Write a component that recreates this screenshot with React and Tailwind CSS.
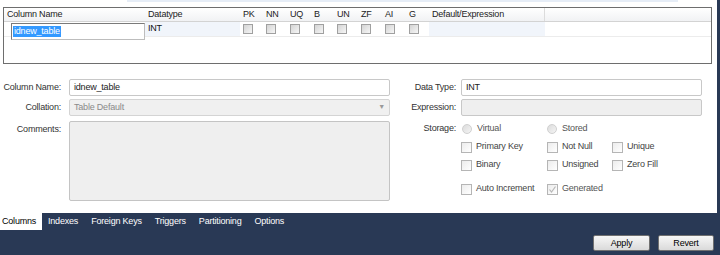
import React from 'react';

const font = { fontFamily: '"Liberation Sans", Arial, sans-serif' };

const gridCols = [
  { key: 'PK', w: 'w-[23px]' },
  { key: 'NN', w: 'w-[24px]' },
  { key: 'UQ', w: 'w-[24px]' },
  { key: 'B', w: 'w-[23px]' },
  { key: 'UN', w: 'w-[24px]' },
  { key: 'ZF', w: 'w-[24px]' },
  { key: 'AI', w: 'w-[24px]' },
  { key: 'G', w: 'w-[23px]' },
];

function GridCheck() {
  return <div className="w-[10px] h-[10px] border border-[#a0a0a0] bg-gradient-to-br from-[#d4d4d4] to-[#f6f6f6]" />;
}

function Check({ label, checked, disabled }) {
  return (
    <div className="flex items-center">
      <div className="w-[11px] h-[11px] border border-[#b5b5b5] bg-gradient-to-br from-[#ececec] to-white flex items-center justify-center">
        {checked && (
          <svg width="9" height="9" viewBox="0 0 9 9">
            <path d="M1.5 4.5 L3.5 7 L7.5 1.5" fill="none" stroke="#b8b8b8" strokeWidth="1.2" />
          </svg>
        )}
      </div>
      <span className={`ml-[4px] ${disabled ? 'text-[#555]' : 'text-[#444]'}`}>{label}</span>
    </div>
  );
}

function Radio({ label }) {
  return (
    <div className="flex items-center">
      <div className="w-[10px] h-[10px] rounded-full border border-[#d0d0d0] bg-gradient-to-br from-[#dcdcdc] to-[#f4f4f4]" />
      <span className="ml-[5px] text-[#555]">{label}</span>
    </div>
  );
}

export default function App() {
  return (
    <div className="w-[720px] h-[255px] bg-[#293955] flex flex-col text-[9px] tracking-[-0.2px] overflow-hidden" style={font}>
      <div className="w-[717px] h-[213px] bg-white flex flex-col">
        {/* grid area */}
        <div className="h-[64px] relative">
          <div className="h-[2px] ml-[127px] w-[551px] bg-[#e6edf7]" />
          <div className="mt-[5px] ml-[3px] w-[709px] h-[57px] border border-[#6e6e6e] bg-white flex flex-col">
            <div className="h-[14px] flex items-center border-b border-[#d3d3d3] bg-gradient-to-b from-white to-[#f1f2f4] text-[#222]">
              <div className="w-[141px] pl-[3px]">Column Name</div>
              <div className="w-[95px] pl-[3px]">Datatype</div>
              {gridCols.map((c) => (
                <div key={c.key} className={`${c.w} pl-[3px]`}>{c.key}</div>
              ))}
              <div className="w-[116px] h-full pl-[3px] border-r border-[#dcdcdc] flex items-center">Default/Expression</div>
            </div>
            <div className="h-[15px] flex items-center border-b border-[#ececec]">
              <div className="w-[141px] h-full relative">
                <div className="absolute left-[7px] top-[1px] w-[134px] h-[17px] border border-[#7a7a7a] border-b-[#bdbdbd] border-r-[#bdbdbd] bg-white flex items-center pl-[1px]">
                  <span className="bg-[#3399ff] text-white px-[1px] leading-[11px]">idnew_table</span>
                </div>
              </div>
              <div className="w-[95px] h-full pl-[3px] flex items-center bg-[#f1f5fb] text-[#111]">INT</div>
              {gridCols.map((c) => (
                <div key={c.key} className={`${c.w} h-full pl-[3px] flex items-center`}>
                  <GridCheck />
                </div>
              ))}
              <div className="w-[116px] h-full bg-[#f1f5fb]" />
            </div>
          </div>
        </div>

        {/* detail panel */}
        <div className="flex pt-[15px] text-[#333]">
          <div className="flex flex-col">
            <div className="flex items-center h-[17px]">
              <div className="w-[61px] text-right">Column Name:</div>
              <div className="ml-[8px] w-[321px] h-[17px] border border-[#c8c8c8] rounded-[2px] bg-white flex items-center pl-[4px] text-[#222]">idnew_table</div>
            </div>
            <div className="flex items-center h-[17px] mt-[3px]">
              <div className="w-[61px] text-right">Collation:</div>
              <div className="ml-[8px] w-[321px] h-[17px] border border-[#d4d4d4] rounded-[2px] bg-[#f0f0f0] flex items-center justify-between pl-[4px] pr-[4px] text-[#8a8a8a]">
                <span>Table Default</span>
                <span className="text-[7px] text-[#999]">▼</span>
              </div>
            </div>
            <div className="flex items-start mt-[5px]">
              <div className="w-[61px] text-right pt-[2px]">Comments:</div>
              <div className="ml-[8px] w-[321px] h-[80px] border border-[#c4c4c4] rounded-[2px] bg-[#efefef]" />
            </div>
          </div>

          <div className="flex flex-col ml-[9px]">
            <div className="flex items-center h-[17px]">
              <div className="w-[57px] text-right">Data Type:</div>
              <div className="ml-[5px] w-[241px] h-[17px] border border-[#c8c8c8] rounded-[2px] bg-white flex items-center pl-[4px] text-[#222]">INT</div>
            </div>
            <div className="flex items-center h-[17px] mt-[3px]">
              <div className="w-[57px] text-right">Expression:</div>
              <div className="ml-[5px] w-[241px] h-[17px] border border-[#c8c8c8] rounded-[2px] bg-[#efefef]" />
            </div>
            <div className="flex items-center h-[16px] mt-[5px]">
              <div className="w-[57px] text-right">Storage:</div>
              <div className="ml-[6px] w-[85px]"><Radio label="Virtual" /></div>
              <Radio label="Stored" />
            </div>
            <div className="flex items-center h-[18px] ml-[62px] mt-[1px]">
              <div className="w-[86px]"><Check label="Primary Key" /></div>
              <div className="w-[65px]"><Check label="Not Null" /></div>
              <Check label="Unique" />
            </div>
            <div className="flex items-center h-[18px] ml-[62px]">
              <div className="w-[86px]"><Check label="Binary" /></div>
              <div className="w-[65px]"><Check label="Unsigned" /></div>
              <Check label="Zero Fill" />
            </div>
            <div className="flex items-center h-[18px] ml-[62px] mt-[6px]">
              <div className="w-[86px]"><Check label="Auto Increment" /></div>
              <Check label="Generated" checked disabled />
            </div>
          </div>
        </div>
      </div>

      {/* tabs */}
      <div className="h-[17px] flex items-center">
        <div className="w-[42px] h-full bg-white text-black pl-[2px] flex items-center">Columns</div>
        <div className="flex items-center gap-[13px] ml-[6px] text-white">
          <span>Indexes</span>
          <span>Foreign Keys</span>
          <span>Triggers</span>
          <span>Partitioning</span>
          <span>Options</span>
        </div>
      </div>

      {/* buttons */}
      <div className="flex justify-end gap-[8px] pr-[6px] pt-[5px]">
        <button className="w-[57px] h-[16px] border border-[#707070] rounded-[2px] bg-gradient-to-b from-[#f7f7f7] to-[#dadada] text-black text-[9px] leading-none">Apply</button>
        <button className="w-[56px] h-[16px] border border-[#707070] rounded-[2px] bg-gradient-to-b from-[#f7f7f7] to-[#dadada] text-black text-[9px] leading-none">Revert</button>
      </div>
    </div>
  );
}
